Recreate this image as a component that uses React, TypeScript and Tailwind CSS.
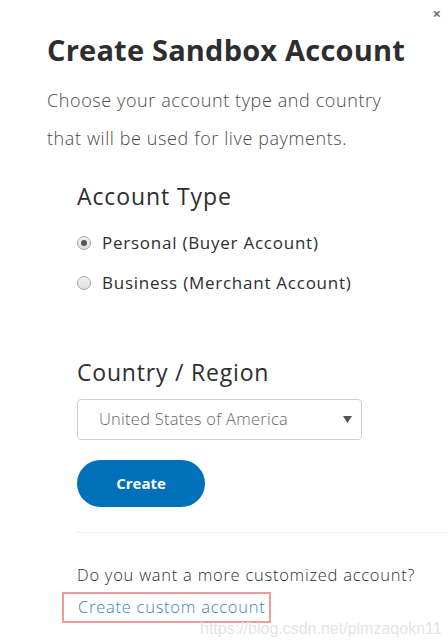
import React from "react";

export default function App() {
  const font = { fontFamily: '"Open Sans", "Noto Sans", sans-serif' };
  return (
    <div className="relative w-[448px] h-[644px] bg-white overflow-hidden text-[#2c2e2f]" style={font}>
      <div className="absolute right-[7px] top-[6px] text-[15px] text-[#6c7378] font-bold leading-none">×</div>
      <div className="pl-[47px] pt-[30px]">
        <h1 className="text-[29px] font-bold leading-[40px] tracking-[0.2px] text-[#2c2e2f]">Create Sandbox Account</h1>
        <p className="mt-[11px] text-[18px] leading-[38px] tracking-[0.6px] text-[#4a4a4a] font-light">
          Choose your account type and country<br />that will be used for live payments.
        </p>
      </div>
      <div className="pl-[77px] pr-0">
        <h2 className="mt-[23px] text-[23px] leading-[32px] tracking-[0.9px] text-[#2c2e2f]">Account Type</h2>
        <div className="mt-[19px] flex flex-col gap-[16px]">
          <label className="flex items-center gap-[11px] h-[24px]">
            <span className="w-[14px] h-[14px] rounded-full border border-[#a9a9a9] bg-gradient-to-b from-[#f3f3f3] to-[#dcdcdc] flex items-center justify-center">
              <span className="w-[6px] h-[6px] rounded-full bg-[#555]" />
            </span>
            <span className="text-[17px] tracking-[0.75px] text-[#2c2e2f]">Personal (Buyer Account)</span>
          </label>
          <label className="flex items-center gap-[11px] h-[24px]">
            <span className="w-[14px] h-[14px] rounded-full border border-[#a9a9a9] bg-gradient-to-b from-[#f3f3f3] to-[#dcdcdc]" />
            <span className="text-[17px] tracking-[0.75px] text-[#2c2e2f]">Business (Merchant Account)</span>
          </label>
        </div>
        <h2 className="mt-[61px] text-[23px] leading-[32px] tracking-[0.8px] text-[#2c2e2f]">Country / Region</h2>
        <div className="mt-[11px] w-[285px] h-[41px] border border-[#d0d0d0] rounded-[4px] flex items-center justify-between pl-[21px] pr-[9px]">
          <span className="text-[16.5px] tracking-[0.25px] text-[#666] font-light">United States of America</span>
          <svg width="9" height="7" viewBox="0 0 9 7"><path d="M0 0h9L4.5 7z" fill="#555" /></svg>
        </div>
        <button className="mt-[20px] w-[128px] h-[47px] rounded-full bg-[#0070ba] text-white text-[15px] font-bold">Create</button>
        <div className="mt-[25px] h-px bg-[#eaeced]" />
        <p className="mt-[30px] text-[16.5px] tracking-[0.75px] text-[#2c2e2f] font-light">Do you want a more customized account?</p>
        <div className="relative mt-[4px] -ml-[15px] w-[209px] h-[31px] border-2 border-[#f09a9a] flex items-center pl-[14px]">
          <span className="text-[16.5px] tracking-[0.75px] text-[#3e82c4] font-light">Create custom account</span>
        </div>
      </div>
      <div className="absolute left-[200px] top-[617px] text-[16px] text-[#e4e4e4]" style={{ fontFamily: '"Liberation Sans", Arial, sans-serif' }}>
        https://blog.csdn.net/plmzaqokn11
      </div>
    </div>
  );
}
